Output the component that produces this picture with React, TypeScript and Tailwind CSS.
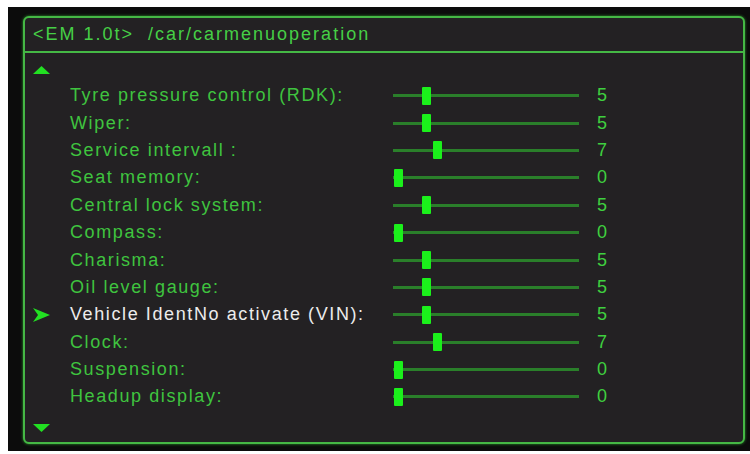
import React from 'react';

type Item = { label: string; value: number; active?: boolean };

const items: Item[] = [
  { label: 'Tyre pressure control (RDK):', value: 5 },
  { label: 'Wiper:', value: 5 },
  { label: 'Service intervall :', value: 7 },
  { label: 'Seat memory:', value: 0 },
  { label: 'Central lock system:', value: 5 },
  { label: 'Compass:', value: 0 },
  { label: 'Charisma:', value: 5 },
  { label: 'Oil level gauge:', value: 5 },
  { label: 'Vehicle IdentNo activate (VIN):', value: 5, active: true },
  { label: 'Clock:', value: 7 },
  { label: 'Suspension:', value: 0 },
  { label: 'Headup display:', value: 0 },
];

function Slider({ value }: { value: number }) {
  // thumb moves ~5.6px per step
  return (
    <div className="relative w-[186px] h-[20px] flex items-center">
      <div className="w-full h-[3px] bg-[#2a7f2a]" />
      <div
        className="absolute top-[1px] w-[9px] h-[18px] bg-[#1bf01b] rounded-[1px]"
        style={{ left: value * 5.6 + 1 }}
      />
    </div>
  );
}

function Row({ item }: { item: Item }) {
  return (
    <div className="flex items-center h-[27.4px]">
      <div className="w-[37px] flex items-center">
        {item.active && (
          <svg width="17" height="14" viewBox="0 0 17 14">
            <path d="M0 0 L17 7 L0 14 L5 7 Z" fill="#22e022" />
          </svg>
        )}
      </div>
      <div
        className={
          'w-[323px] text-[18px] tracking-[1.6px] whitespace-nowrap ' +
          (item.active ? 'text-[#ececec]' : 'text-[#3fc43f]')
        }
      >
        {item.label}
      </div>
      <Slider value={item.value} />
      <div className="ml-[18px] text-[18px] text-[#3fd03f]">{item.value}</div>
    </div>
  );
}

export default function App() {
  return (
    <div
      className="w-[750px] h-[454px] bg-white pt-[7px] pl-[8px] pb-[3px]"
      style={{ fontFamily: '"Liberation Sans", Arial, sans-serif' }}
    >
      <div className="w-full h-full bg-[#0c0c0c] pt-[9px] pl-[15px] pr-[5px] pb-[7px]">
        <div className="w-full h-full flex flex-col rounded-[6px] border-2 border-[#45b845] bg-[#232123] shadow-[0_0_3px_#2f9a2f]">
          <div className="h-[35px] flex items-center pl-[8px] border-b-2 border-[#45b845] text-[18px] tracking-[2px] whitespace-nowrap text-[#46cf46]">
            &lt;EM 1.0t&gt;&nbsp; /car/carmenuoperation
          </div>
          <div className="flex-1 flex flex-col pl-[8px]">
            <div className="h-[29px] flex items-center pt-[4px]">
              <svg width="17" height="8" viewBox="0 0 17 8">
                <path d="M8.5 0 L17 8 L0 8 Z" fill="#22e022" />
              </svg>
            </div>
            {items.map((it) => (
              <Row key={it.label} item={it} />
            ))}
            <div className="flex-1 flex items-center pt-[4px]">
              <svg width="17" height="8" viewBox="0 0 17 8">
                <path d="M0 0 L17 0 L8.5 8 Z" fill="#22e022" />
              </svg>
            </div>
          </div>
        </div>
      </div>
    </div>
  );
}
